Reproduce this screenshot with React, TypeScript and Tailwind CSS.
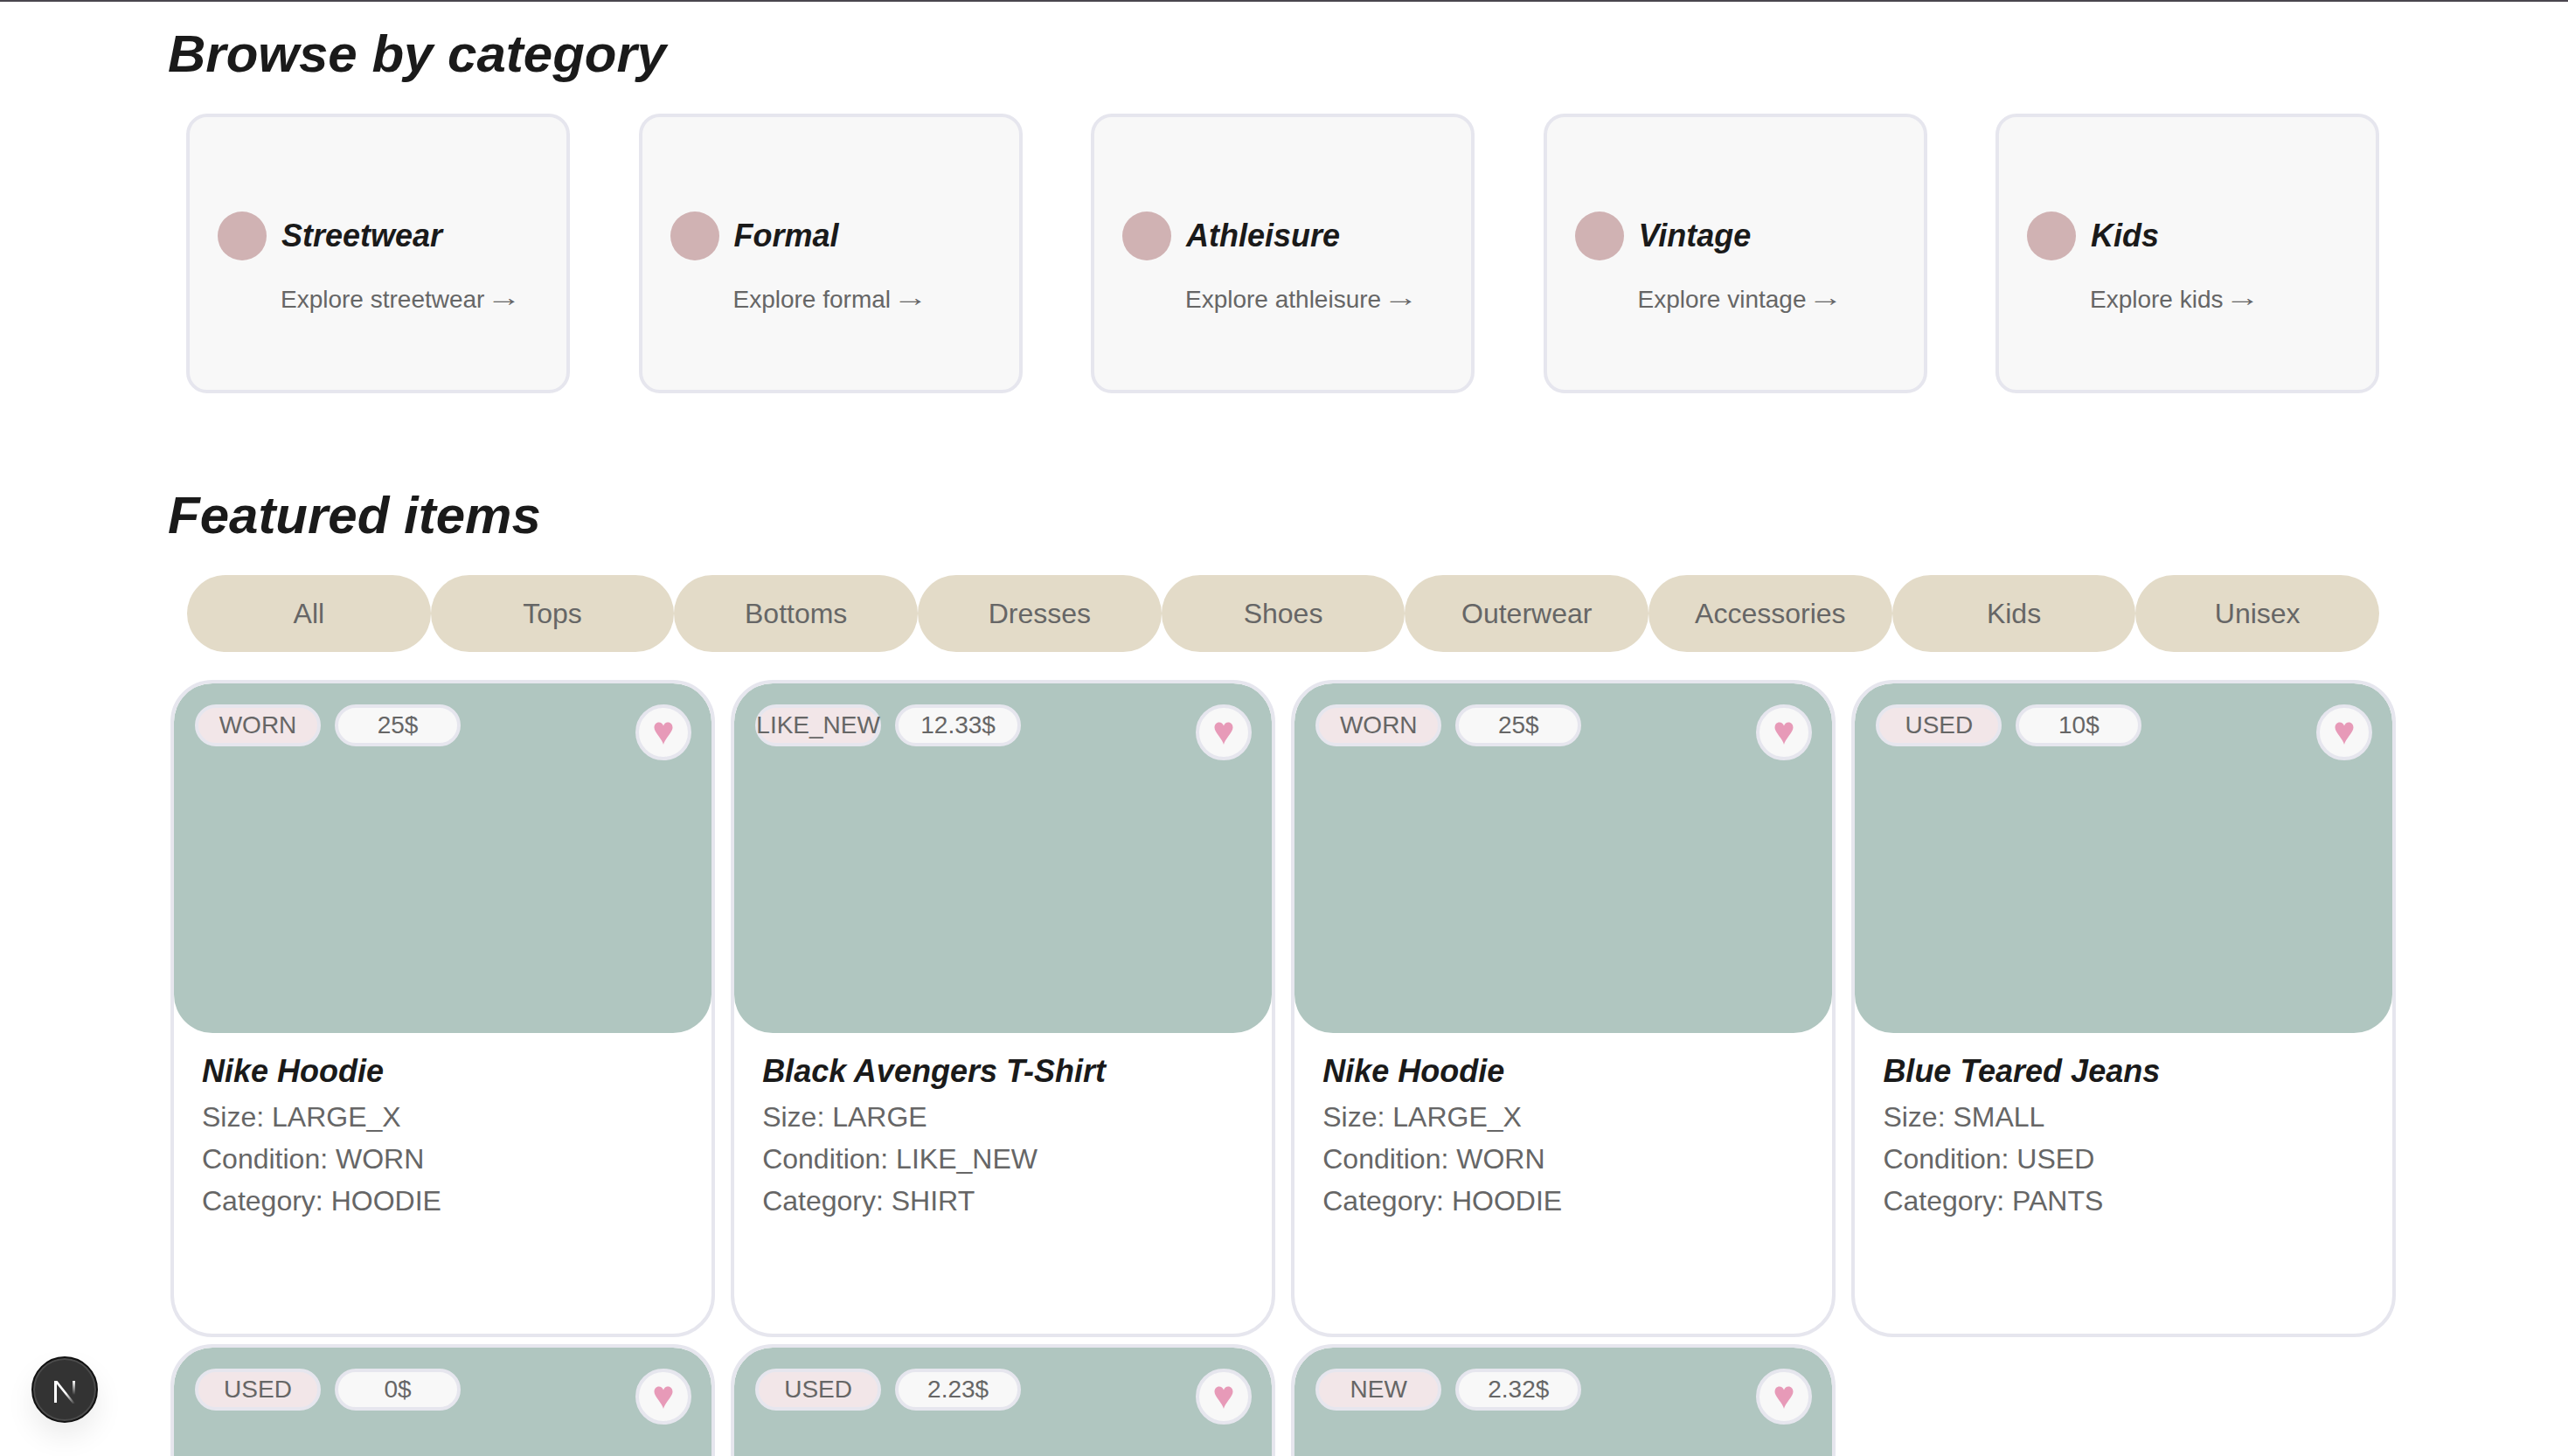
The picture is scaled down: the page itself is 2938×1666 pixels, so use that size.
const categories = [
  ["Streetwear", "Explore streetwear"],
  ["Formal", "Explore formal"],
  ["Athleisure", "Explore athleisure"],
  ["Vintage", "Explore vintage"],
  ["Kids", "Explore kids"],
];
const filters = ["All", "Tops", "Bottoms", "Dresses", "Shoes", "Outerwear", "Accessories", "Kids", "Unisex"];
const items = [
  { c: "WORN", p: "25$", t: "Nike Hoodie", s: "LARGE_X", k: "HOODIE" },
  { c: "LIKE_NEW", p: "12.33$", t: "Black Avengers T-Shirt", s: "LARGE", k: "SHIRT" },
  { c: "WORN", p: "25$", t: "Nike Hoodie", s: "LARGE_X", k: "HOODIE" },
  { c: "USED", p: "10$", t: "Blue Teared Jeans", s: "SMALL", k: "PANTS" },
  { c: "USED", p: "0$", t: "", s: "", k: "" },
  { c: "USED", p: "2.23$", t: "", s: "", k: "" },
  { c: "NEW", p: "2.32$", t: "", s: "", k: "" },
];

function Card({ it }: { it: (typeof items)[number] }) {
  return (
    <div className="h-[752px] rounded-[48px] border-4 border-[#e6e6ee] bg-white overflow-hidden">
      <div className="relative h-[400px] rounded-[44px] bg-[#b0c6c0] pt-6 pl-6 pr-6">
        <div className="flex gap-4">
          <span className="flex h-12 w-[144px] items-center justify-center rounded-full border-4 border-[#e6e6ee] bg-[#f2e6e8] text-[28px] leading-none text-[#666666] whitespace-nowrap">
            {it.c}
          </span>
          <span className="flex h-12 w-[144px] items-center justify-center rounded-full border-4 border-[#e6e6ee] bg-[#f8f8f8] text-[28px] leading-none text-[#666666] whitespace-nowrap">
            {it.p}
          </span>
        </div>
        <span className="absolute right-[23px] top-6 flex h-16 w-16 items-center justify-center rounded-full border-4 border-[#e6e6ee] bg-[#f8f8f8]">
          <svg width="22" height="26" viewBox="0 0 22 26" fill="#e79ab8" className="mt-[2px]">
            <path d="M11 26C10 20 .5 12 .5 6.5C.5 3 2.8 .5 5.8 .5C8.2 .5 10 2 11 4.5C12 2 13.8 .5 16.2 .5C19.2 .5 21.5 3 21.5 6.5C21.5 12 12 20 11 26Z" />
          </svg>
        </span>
      </div>
      {it.t && (
        <div className="px-8 pt-5">
          <h3 className="text-[36px] font-bold italic leading-[48px] text-[#1a1a1a] mb-1">{it.t}</h3>
          <p className="text-[32px] leading-[48px] text-[#666666]">Size: {it.s}</p>
          <p className="text-[32px] leading-[48px] text-[#666666]">Condition: {it.c}</p>
          <p className="text-[32px] leading-[48px] text-[#666666]">Category: {it.k}</p>
        </div>
      )}
    </div>
  );
}

export default function App() {
  return (
    <div className="relative h-[1666px] overflow-hidden bg-white font-['Liberation_Sans',Arial,sans-serif]">
      <div className="h-[2px] bg-[#4a464e]" />
      <div className="pl-[192px] pr-[216px] pt-[24px]">
        <h2 className="text-[60px] font-bold italic leading-[72px] text-[#1a1a1a]">Browse by category</h2>
        <div className="mt-[32px] ml-[21px] flex justify-between">
          {categories.map(([t, e]) => (
            <div key={t} className="flex h-[320px] w-[439px] flex-col justify-center rounded-[24px] border-4 border-[#e6e6ee] bg-[#f8f8f8] pl-8 pt-[25px]">
              <div className="flex items-center gap-[17px]">
                <span className="h-14 w-14 rounded-full bg-[#d0b2b3]" />
                <span className="text-[36px] font-bold italic leading-[56px] text-[#1a1a1a]">{t}</span>
              </div>
              <div className="mt-[25px] pl-[72px] text-[28px] leading-[40px] text-[#666666] whitespace-nowrap">
                {e} <span className="-ml-[6px] inline-block origin-left scale-x-[1.45] -translate-y-[2px]">→</span>
              </div>
            </div>
          ))}
        </div>
        <h2 className="mt-[104px] text-[60px] font-bold italic leading-[72px] text-[#1a1a1a]">Featured items</h2>
        <div className="mt-[32px] ml-[22px] flex">
          {filters.map((f) => (
            <span key={f} className="flex h-[88px] flex-1 items-center justify-center rounded-full bg-[#e3dbc8] text-[32px] text-[#666666]">
              {f}
            </span>
          ))}
        </div>
        <div className="mt-[32px] ml-[3px] grid w-[2546px] grid-cols-4 gap-x-[18.5px] gap-y-[8px]">
          {items.map((it, i) => (
            <Card key={i} it={it} />
          ))}
        </div>
      </div>
      <div className="absolute left-[36px] top-[1552px] flex h-[76px] w-[76px] items-center justify-center rounded-full border-2 border-[#111111] bg-[#333333] shadow-[inset_0_0_0_2px_rgba(255,255,255,0.12),0_16px_32px_rgba(0,0,0,0.08)]">
        <svg width="26" height="28" viewBox="0 0 26 28" fill="none" className="mt-[5px]">
          <defs>
            <linearGradient id="nd" x1="0" y1="0" x2="1" y2="1">
              <stop offset="0.55" stopColor="#ffffff" />
              <stop offset="1" stopColor="#ffffff" stopOpacity="0" />
            </linearGradient>
            <linearGradient id="ns" x1="0" y1="0" x2="0" y2="1">
              <stop offset="0" stopColor="#ffffff" />
              <stop offset="1" stopColor="#ffffff" stopOpacity="0" />
            </linearGradient>
          </defs>
          <path d="M1 1H4V26H1Z" fill="#ffffff" />
          <path d="M1 1H4.5L25 27H22Z" fill="url(#nd)" />
          <path d="M22 1H25V17H22Z" fill="url(#ns)" />
        </svg>
      </div>
    </div>
  );
}
